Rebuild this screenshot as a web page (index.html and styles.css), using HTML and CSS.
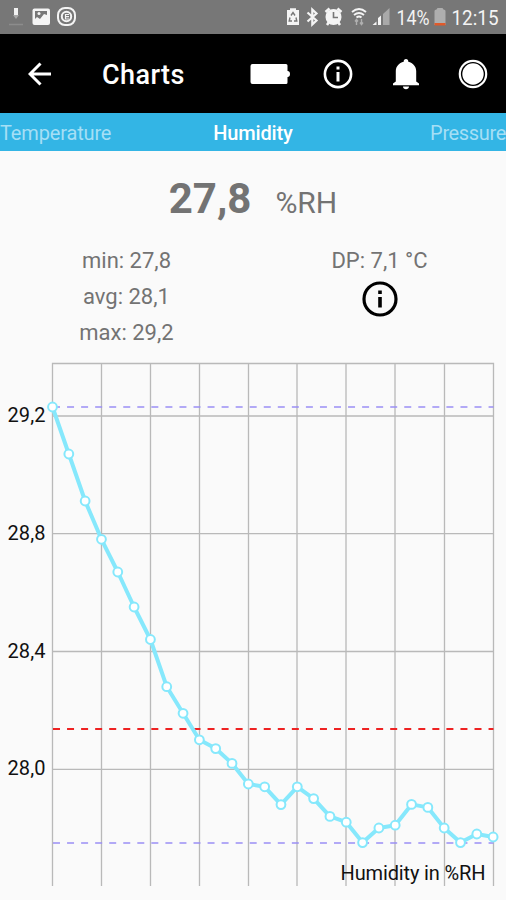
FILE: index.html
```html
<!DOCTYPE html>
<html lang="en">

<head>
    <meta charset="UTF-8" />
    <meta name="viewport" content="width=device-width, initial-scale=1.0">
    <title>Charts</title>
    <link rel="stylesheet" href="styles.css">
</head>

<body>
    <div class="status-bar">
        <!-- download, picture, app -->
        <svg class="status-left" width="80" height="34" viewBox="0 0 80 34">
            <path d="M14 8h4v7h-4z" fill="#f2f2f2" />
            <path d="M13 15h6l-3 4z" fill="#a8a8a8" />
            <path d="M9 24.500h14" stroke="#8c8c8c" stroke-width="1.500" />
            <rect x="32.500" y="8.500" width="17.500" height="16.500" rx="2" fill="#f4f4f4" />
            <path d="M35 11h12v4l-3-1-4 5-3-2-2 2z" fill="#777" />
            <circle cx="39" cy="13.500" r="1.500" fill="#f4f4f4" />
            <rect x="58" y="8" width="17" height="17" rx="7" fill="none" stroke="#f4f4f4" stroke-width="2" />
            <circle cx="66.500" cy="16.500" r="4.700" fill="none" stroke="#f4f4f4" stroke-width="2" />
            <path d="M69 14.500h-3.500v4.500h3.500M66 16.700h3" fill="none" stroke="#f4f4f4" stroke-width="1.200" />
        </svg>
        <!-- battery saver, bluetooth, alarm, wifi, signal, battery, clock -->
        <svg width="220" height="34" viewBox="286 0 220 34">
            <path d="M287 10h3v-1.800h6v1.800h3v15h-12z" fill="#f4f4f4" />
            <path d="M291 15.500l2-3 2 3M290 17.500l-.8 3.500h2.800M296 17.500l.8 3.500h-2.800" fill="none" stroke="#777" stroke-width="1.400" />
            <path d="M307.500 12.500l9 8-4.200 4v-15l4.200 4-9 8" fill="none" stroke="#f4f4f4" stroke-width="2.200" />
            <circle cx="333.500" cy="17" r="8" fill="#f4f4f4" />
            <path d="M325.500 12l4-3.500M341.500 12l-4-3.500M327 25l2-3M340 25l-2-3" stroke="#f4f4f4" stroke-width="2.500" />
            <path d="M333.500 12v5.500h4.500" fill="none" stroke="#777" stroke-width="1.600" />
            <path d="M352 12q7-6 14 0M354 15q5-4 10 0M356.500 17.500q2.500-2 5 0" fill="none" stroke="#f4f4f4" stroke-width="1.900" />
            <path d="M356.500 20v5M361.500 19v5M355 21.500l1.500-2 1.500 2M360 22.500l1.500 2 1.500-2" fill="none" stroke="#b0b0b0" stroke-width="1.400" />
            <path d="M372.500 25l4-3.500v3.500zM378 25v-7l3-2.500v9.500z" fill="#f4f4f4" />
            <path d="M383 25v-11l6.500-6v17z" fill="#a9a9a9" />
            <text class="status-text" x="396.500" y="24.500" textLength="33" lengthAdjust="spacingAndGlyphs">14%</text>
            <path d="M434.500 25v-14q0-1.500 2-1.500l1-1.500h5l1 1.500q2 0 2 1.500v14z" fill="#aeaeae" />
            <path d="M434.500 23h11v2.500h-11z" fill="#df5a2b" />
            <text class="status-text" x="451.500" y="24.500" textLength="47" lengthAdjust="spacingAndGlyphs">12:15</text>
        </svg>
    </div>

    <div class="toolbar">
        <svg width="24" height="24" viewBox="0 0 24 24">
            <path d="M23 12H2M12.500 1.500L2 12l10.500 10.500" fill="none" stroke="#fff" stroke-width="3" />
        </svg>
        <h1>Charts</h1>
        <svg width="40" height="22" viewBox="0 0 40 22">
            <path d="M2.500 1h33.500q1.500 0 1.500 1.500v5.500q2.500 0 2.500 3t-2.500 3v5.500q0 1.500-1.500 1.500h-33.500q-2 0-2-2v-16q0-2 2-2z" fill="#fff" />
        </svg>
        <svg class="info" width="30" height="30" viewBox="0 0 30 30">
            <circle cx="15" cy="15" r="13.100" fill="none" stroke="#fff" stroke-width="2.600" />
            <path d="M15 7.500v3M15 13v9.500" stroke="#fff" stroke-width="3" />
        </svg>
        <svg class="bell" width="28" height="32" viewBox="0 0 28 32">
            <path d="M14 1c1.500 0 2.300 1 2.300 2.700 4.700 1.200 7.900 4.800 7.900 9.300v10.500l2.800 2v1.800h-26v-1.800l2.800-2v-10.500c0-4.500 3.200-8.100 7.900-9.300C11.700 2 12.500 1 14 1zM11 28.500h6c0 3.500-6 3.500-6 0z" fill="#fff" />
        </svg>
        <svg width="30" height="30" viewBox="0 0 30 30">
            <circle cx="15" cy="15" r="13.200" fill="none" stroke="#fff" stroke-width="2.200" />
            <circle cx="15" cy="15" r="10.700" fill="#fff" />
        </svg>
    </div>

    <div class="tabs">
        <span>Temperature</span>
        <span class="active">Humidity</span>
        <span>Pressure</span>
    </div>

    <div class="current">
        <span class="value">27,8</span>
        <span class="unit">%RH</span>
    </div>

    <div class="stats">
        <div class="column">
            <div>min: 27,8</div>
            <div>avg: 28,1</div>
            <div>max: 29,2</div>
        </div>
        <div class="column">
            <div>DP: 7,1 °C</div>
            <svg width="36" height="38" viewBox="0 0 36 38">
                <circle cx="18" cy="20" r="16" fill="none" stroke="#000" stroke-width="3.200" />
                <path d="M18 11.500v3.500M18 18v10.500" stroke="#000" stroke-width="3.600" />
            </svg>
        </div>
    </div>

    <svg class="chart" width="506" height="545" viewBox="0 355 506 545">
        <path class="grid" d="M52.500 886V363.500H493.500V886M101.500 363.500V886M150.500 363.500V886M199.500 363.500V886M248.500 363.500V886M297 363.500V886M346 363.500V886M395 363.500V886M444.500 363.500V886" />
        <path class="grid" d="M52.500 416H493.500M52.500 533.700H493.500M52.500 651.500H493.500M52.500 769.300H493.500" />

        <path class="limit" d="M53 407H493.500M53 843H493.500" />
        <path class="average" d="M53 729H493.500" />

        <text x="7.500" y="422" textLength="38">29,2</text>
        <text x="7.500" y="539.500" textLength="38">28,8</text>
        <text x="7.500" y="657.500" textLength="38">28,4</text>
        <text x="7.500" y="775" textLength="38">28,0</text>
        <g id="series"></g>
        <text x="340.500" y="879.500" textLength="145">Humidity in %RH</text>
    </svg>

    <script>
        // vertical position of every sample, left to right
        const samples = [407, 454, 501, 539.3, 572, 607, 639.5, 686.7, 713.3, 739.8, 748.6, 763.4, 784, 786.8,
            804.6, 786.8, 798.6, 816.4, 822.2, 842.6, 828, 825.2, 804.4, 807.4, 828, 842.6, 834, 837];
        const points = samples.map((y, i) => [52.500 + i * 16.320, y]);

        let html = `<polyline class="line" points="${points.join(' ')}" />`;
        for (const [x, y] of points) {
            html += `<circle class="dot" cx="${x}" cy="${y}" r="4.400" />`;
        }
        document.getElementById('series').innerHTML = html;
    </script>
</body>

</html>
```
FILE: styles.css
```css
body {
    margin: 0;
    width: 506px;
    height: 900px;
    overflow: hidden;
    background: #fafafa;
    color: #737373;
    font-family: Roboto, 'Liberation Sans', sans-serif;
}

svg {
    display: block;
    flex-shrink: 0;
}

.status-bar {
    display: flex;
    justify-content: space-between;
    height: 34px;
    background: #777;
}

.status-text {
    fill: #f4f4f4;
    font-size: 21px;
}

.toolbar {
    display: flex;
    align-items: center;
    box-sizing: border-box;
    height: 79px;
    padding: 0 18px 0 28px;
    background: #000;
}

.toolbar h1 {
    flex: 1;
    margin: 3px 0 0 50px;
    color: #fff;
    font-size: 27px;
    font-weight: 500;
    letter-spacing: 0.4px;
}

.toolbar .info {
    margin: 0 39px 0 33px;
}

.toolbar .bell {
    margin-right: 38px;
}

.tabs {
    display: grid;
    grid-template-columns: 1fr auto 1fr;
    height: 38px;
    line-height: 40px;
    background: #33b5e5;
    color: #a5dff5;
    font-size: 20px;
    letter-spacing: -0.15px;
}

.tabs span:last-child {
    text-align: right;
    letter-spacing: -0.35px;
}

.tabs .active {
    color: #fff;
    font-weight: 500;
}

.current {
    display: flex;
    justify-content: center;
    align-items: baseline;
    gap: 24px;
    height: 92px;
    line-height: 96px;
}

.value {
    font-size: 42px;
    font-weight: bold;
}

.unit {
    font-size: 30px;
}

.stats {
    display: flex;
    height: 112px;
    font-size: 22px;
    line-height: 36px;
}

.column {
    display: flex;
    flex: 1;
    flex-direction: column;
    align-items: center;
}

.chart text {
    fill: #111;
    font-size: 20px;
}

.grid {
    fill: none;
    stroke: #b9b9b9;
    stroke-width: 1.300;
}

.limit {
    stroke: #9b8ff5;
    stroke-width: 1.700;
    stroke-dasharray: 7 7.050;
}

.average {
    stroke: #ee2222;
    stroke-width: 2.200;
    stroke-dasharray: 7 7.050;
}

.line {
    fill: none;
    stroke: #86e8fc;
    stroke-width: 4;
    stroke-linejoin: round;
}

.dot {
    fill: #fff;
    stroke: #86e8fc;
    stroke-width: 2;
}
```
